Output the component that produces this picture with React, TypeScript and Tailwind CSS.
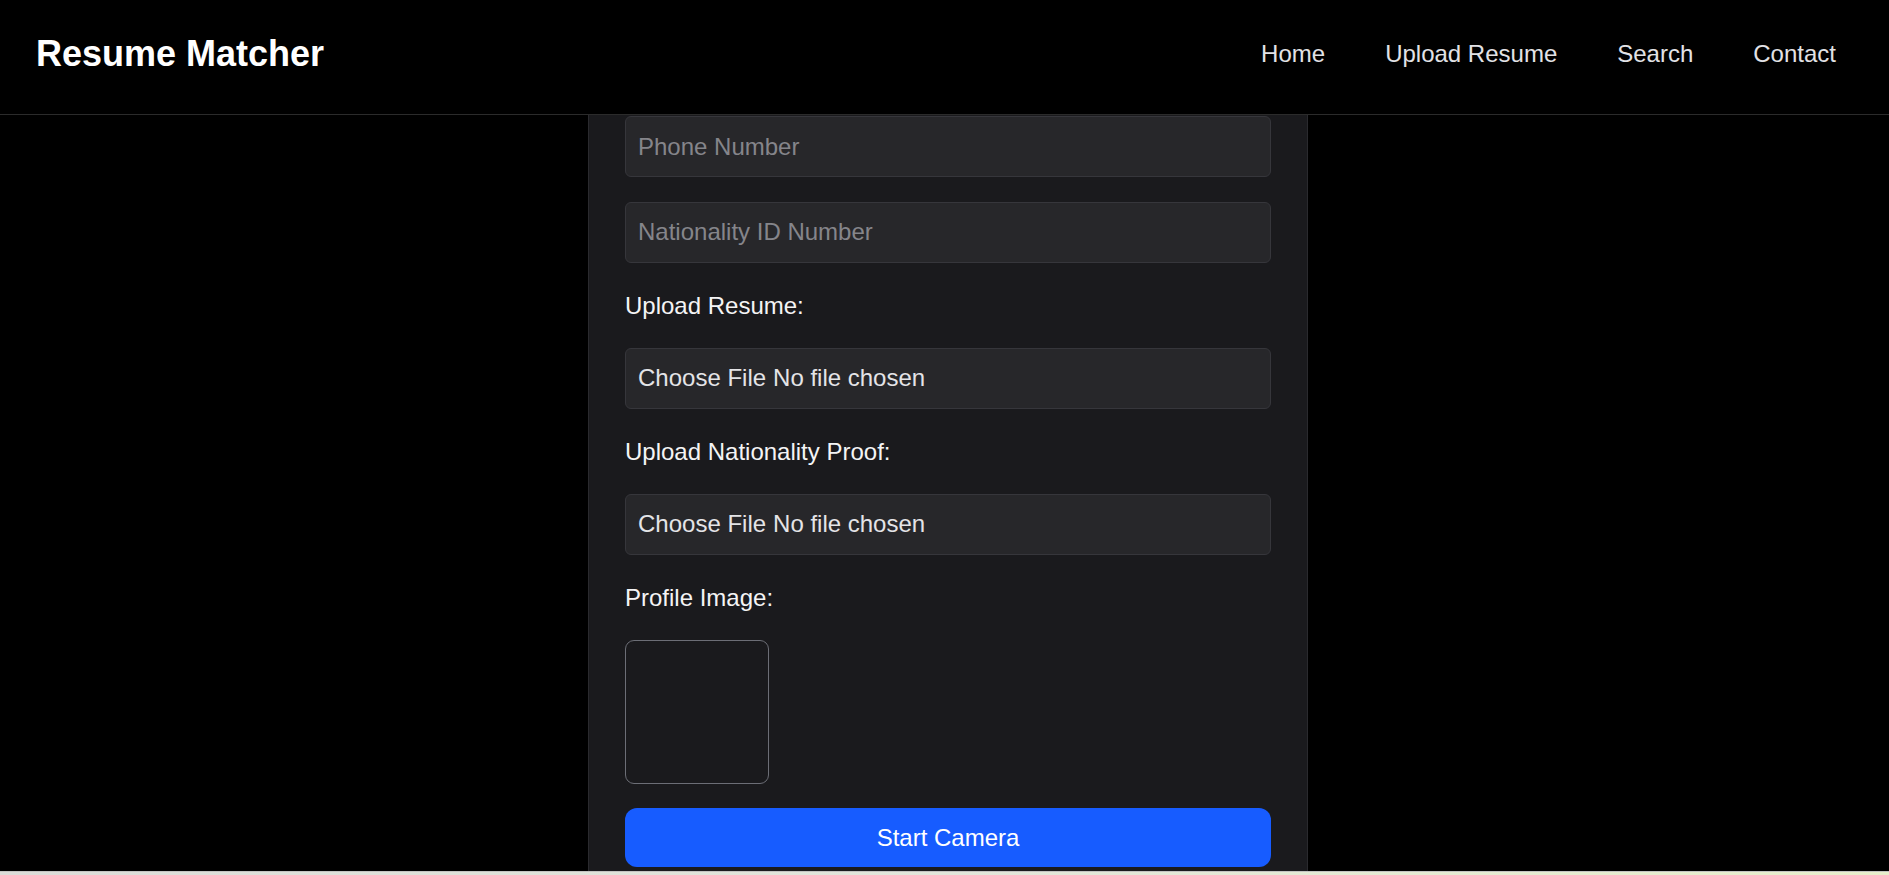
const FONT = { fontFamily: '"Liberation Sans", Arial, sans-serif' } as const;

const NAV_LINKS = ["Home", "Upload Resume", "Search", "Contact"];

function TextField({ placeholder }: { placeholder: string }) {
  return (
    <input
      type="text"
      placeholder={placeholder}
      className="h-[61px] w-full rounded-[6px] border border-[#36363b] bg-[#27272a] px-[12px] text-[24px] text-[#e4e4e7] outline-none placeholder:text-[#85858a]"
    />
  );
}

function FileField() {
  return (
    <div className="flex h-[61px] w-full items-center rounded-[6px] border border-[#36363b] bg-[#27272a] px-[12px] text-[24px] text-[#e4e4e7]">
      <span>Choose File</span>
      <span className="ml-[7px]">No file chosen</span>
    </div>
  );
}

function FieldLabel({ children }: { children: React.ReactNode }) {
  return (
    <p className="-mb-[2px] text-[24px] leading-[38px] text-[#f4f4f5]">{children}</p>
  );
}

export default function App() {
  return (
    <div className="flex h-[875px] flex-col overflow-hidden bg-black" style={FONT}>
      {/* Top bar */}
      <header className="flex h-[115px] shrink-0 items-center justify-between border-b border-[#2b2b2b] bg-black pb-[7px] pl-[36px] pr-[53px]">
        <h1 className="text-[36px] font-bold text-white">Resume Matcher</h1>
        <nav className="flex items-center gap-[60px]">
          {NAV_LINKS.map((link) => (
            <a key={link} href="#" className="text-[24px] text-[#e2e2e6]">
              {link}
            </a>
          ))}
        </nav>
      </header>

      {/* Form card, scrolled so its top sits under the bar */}
      <main className="flex flex-1 justify-center overflow-hidden pl-[7px]">
        <div className="w-[720px] shrink-0 border-x border-[#2a2a2e] bg-[#1a1a1d] px-[36px] pt-[1px]">
          <form className="flex flex-col gap-[24.5px]">
            <TextField placeholder="Phone Number" />
            <TextField placeholder="Nationality ID Number" />

            <FieldLabel>Upload Resume:</FieldLabel>
            <FileField />

            <FieldLabel>Upload Nationality Proof:</FieldLabel>
            <FileField />

            <FieldLabel>Profile Image:</FieldLabel>
            <div className="h-[144px] w-[144px] rounded-[9px] border border-[#6c6e76] bg-[#1a1a1d]" />

            <button
              type="button"
              className="h-[59px] w-full rounded-[12px] bg-[#175cff] text-[24px] text-white"
            >
              Start Camera
            </button>
          </form>
        </div>
      </main>

      {/* Desktop strip at the very bottom */}
      <div className="h-[4px] shrink-0 border-t border-[#c4c4c2] bg-gradient-to-r from-[#dcdcd8] via-[#e2e6da] to-[#e8eecb]" />
    </div>
  );
}
